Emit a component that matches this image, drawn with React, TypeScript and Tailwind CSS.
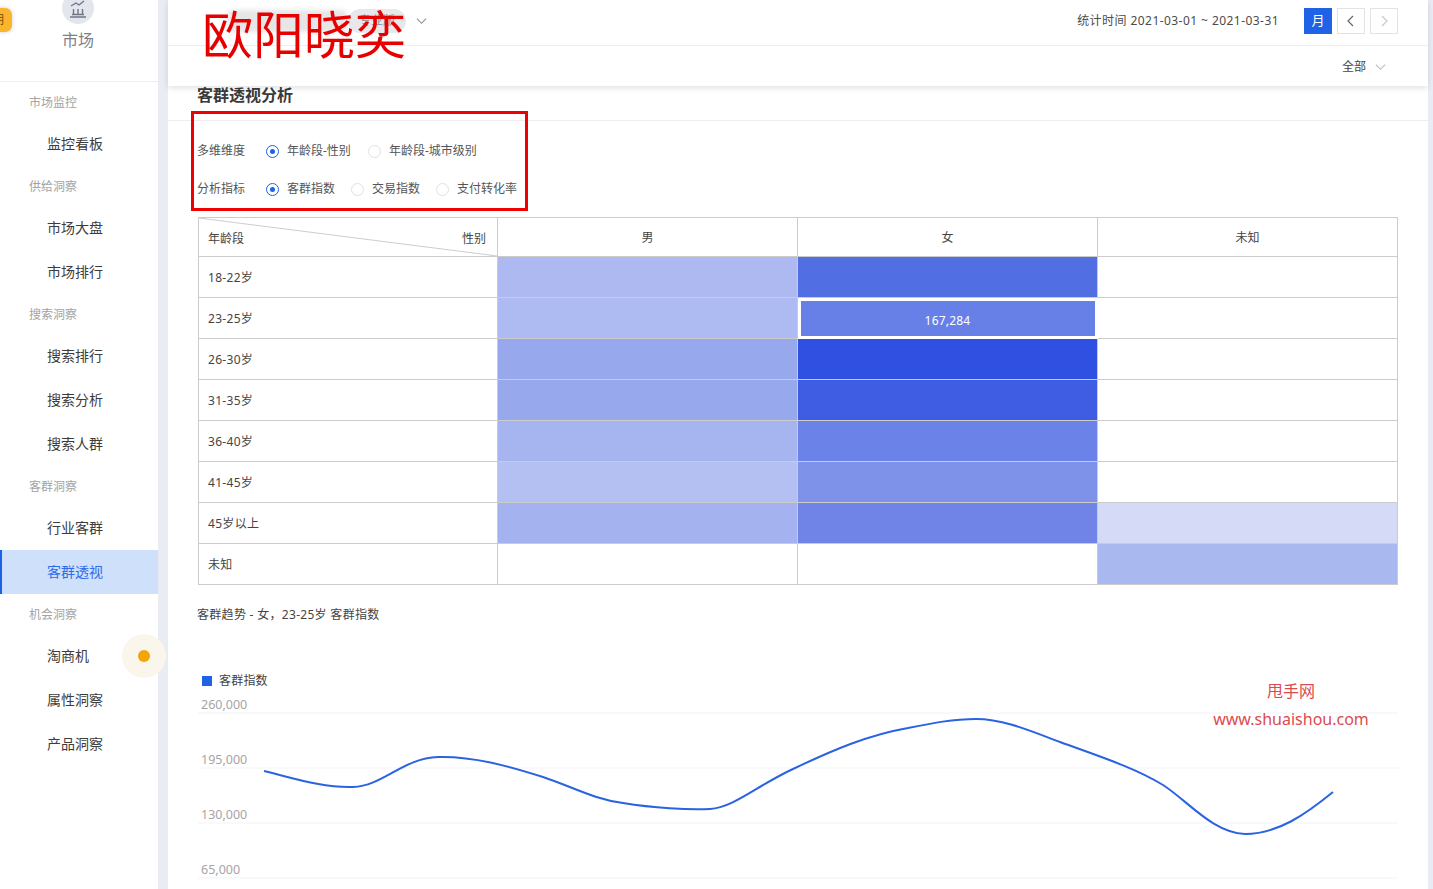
const FONT = "font-['Noto_Sans','Noto_Sans_CJK_SC',sans-serif]";

const NAV = [
  { group: "市场监控", items: ["监控看板"] },
  { group: "供给洞察", items: ["市场大盘", "市场排行"] },
  { group: "搜索洞察", items: ["搜索排行", "搜索分析", "搜索人群"] },
  { group: "客群洞察", items: ["行业客群", "客群透视"] },
  { group: "机会洞察", items: ["淘商机", "属性洞察", "产品洞察"] },
];

const ROWS = [
  { age: "18-22岁", male: "bg-[#aeb9f1]", female: "bg-[#516fe3]", unknown: "" },
  { age: "23-25岁", male: "bg-[#aebaf2]", female: "", unknown: "" },
  { age: "26-30岁", male: "bg-[#98a8ec]", female: "bg-[#2f50e0]", unknown: "" },
  { age: "31-35岁", male: "bg-[#98a8ec]", female: "bg-[#3e5de2]", unknown: "" },
  { age: "36-40岁", male: "bg-[#a6b4ef]", female: "bg-[#6b82e8]", unknown: "" },
  { age: "41-45岁", male: "bg-[#b4c0f2]", female: "bg-[#7f92ea]", unknown: "" },
  { age: "45岁以上", male: "bg-[#a4b2ef]", female: "bg-[#7084e8]", unknown: "bg-[#d5daf7]" },
  { age: "未知", male: "", female: "", unknown: "bg-[#aab8f0]" },
];

function Chevron({ dir = "down", className = "" }: { dir?: "down" | "left" | "right"; className?: string }) {
  const d = dir === "down" ? "M1 1.5l5 5 5-5" : dir === "left" ? "M8 1L3 6l5 5" : "M4 1l5 5-5 5";
  return (
    <svg viewBox={dir === "down" ? "0 0 12 8" : "0 0 12 12"} className={className} fill="none" stroke="currentColor" strokeWidth="1.2">
      <path d={d} />
    </svg>
  );
}

function Radio({ label, checked = false }: { label: string; checked?: boolean }) {
  return (
    <span className="flex items-center gap-[8px]">
      <span className={`flex h-[13px] w-[13px] items-center justify-center rounded-full border ${checked ? "border-[#2062e6]" : "border-[#e0e0e0]"}`}>
        {checked && <span className="h-[5px] w-[5px] rounded-full bg-[#2062e6]" />}
      </span>
      <span>{label}</span>
    </span>
  );
}

function Sidebar() {
  return (
    <aside className="relative w-[158px] shrink-0 bg-white">
      <div className="relative h-[82px] border-b border-[#eeeeee]">
        <div className="absolute -top-[8px] left-[62px] flex h-[32px] w-[32px] items-center justify-center rounded-full bg-[#e4e6ee] text-[#6f7686]">
          <svg viewBox="0 0 20 20" className="h-[20px] w-[20px]" fill="none" stroke="currentColor" strokeWidth="1.4">
            <path d="M2 19h16M4 16.5h12M5.5 16V11M10 16V11M14.5 16V11M3 8l5-3 3 2 5-4" />
          </svg>
        </div>
        <div className="absolute left-[-1px] top-[30px] w-full text-center text-[16px] leading-[21px] text-[#7d8087]">市场</div>
        <div className="absolute -left-[6px] top-[8px] flex h-[24px] w-[18px] items-center justify-end rounded-[7px] bg-[#fbb52c] pr-[8px] text-[12px] text-[#7a5200] shadow-[0_0_4px_rgba(0,0,0,0.2)]">
          期
        </div>
      </div>
      {NAV.map((n) => (
        <div key={n.group}>
          <div className="flex h-[40px] items-center pl-[29px] pt-[2px] text-[12px] text-[#a3a3a3]">{n.group}</div>
          {n.items.map((item) => (
            <div
              key={item}
              className={
                item === "客群透视"
                  ? "relative flex h-[44px] items-center border-l-2 border-[#1c62e8] bg-[#cfe0fb] pb-[2px] pl-[45px] text-[14px] text-[#2d6be8]"
                  : "relative flex h-[44px] items-center pb-[2px] pl-[47px] text-[14px] text-[#3c3c3c]"
              }
            >
              {item}
              {item === "淘商机" && (
                <span className="absolute left-[122px] top-0 flex h-[44px] w-[44px] items-center justify-center rounded-full bg-[#fbf6ec]">
                  <span className="h-[12px] w-[12px] rounded-full bg-[#f4a504]" />
                </span>
              )}
            </div>
          ))}
        </div>
      ))}
    </aside>
  );
}

function Header() {
  return (
    <header className="relative z-10 h-[86px] bg-white shadow-[0_2px_6px_rgba(0,0,0,0.12)]">
      <div className="relative flex h-[46px] items-center border-b border-[#eeeeee] pb-[3px]">
        <div className="ml-[60px] h-[22px] w-[118px] rounded-[4px] bg-[#e6e6e6] blur-[2px]" />
        <div className="ml-[2px] flex h-[24px] w-[58px] items-center justify-center rounded-full bg-[#e8e8ec] text-[12px] text-[#8f8f8f]">专业版</div>
        <Chevron className="ml-[10px] h-[8px] w-[11px] text-[#8f8f8f]" />
        <div className="ml-auto flex items-center text-[12px] text-[#4c4c4c]">
          <span className="tracking-[0.44px]">统计时间 2021-03-01 ~ 2021-03-31</span>
          <span className="ml-[25px] flex h-[26px] w-[28px] items-center justify-center bg-[#1f62e5] text-[13px] text-white">月</span>
          <span className="ml-[5px] flex h-[26px] w-[28px] items-center justify-center border border-[#e3e3e3] text-[#666666]">
            <Chevron dir="left" className="h-[12px] w-[12px]" />
          </span>
          <span className="ml-[5px] mr-[30px] flex h-[26px] w-[28px] items-center justify-center border border-[#e3e3e3] text-[#c8c8c8]">
            <Chevron dir="right" className="h-[12px] w-[12px]" />
          </span>
        </div>
      </div>
      <div className="flex h-[40px] items-center justify-end pr-[42px] pt-[2px] text-[12px] text-[#444444]">
        <span>全部</span>
        <Chevron className="ml-[9px] h-[8px] w-[11px] text-[#bdbdbd]" />
      </div>
    </header>
  );
}

function HeatTable() {
  const cell = "border border-[#cccccc] p-0";
  return (
    <table className="ml-[30px] w-[1200px] table-fixed border-collapse text-[12px] text-[#444444]">
      <thead>
        <tr className="h-[39px]">
          <th className={`${cell} relative w-[299px] font-normal`}>
            <svg viewBox="0 0 299 39" preserveAspectRatio="none" className="absolute inset-0 h-full w-full text-[#cccccc]">
              <path d="M0 0L299 39" stroke="currentColor" fill="none" />
            </svg>
            <div className="flex justify-between pl-[9px] pr-[11px] pt-[3px]">
              <span>年龄段</span>
              <span>性别</span>
            </div>
          </th>
          <th className={`${cell} pt-[2px] font-normal`}>男</th>
          <th className={`${cell} pt-[2px] font-normal`}>女</th>
          <th className={`${cell} pt-[2px] font-normal`}>未知</th>
        </tr>
      </thead>
      <tbody>
        {ROWS.map((r) => (
          <tr key={r.age} className="h-[41px]">
            <td className={`${cell} pl-[9px] pt-[2px] tracking-[0.3px]`}>{r.age}</td>
            <td className={`${cell} ${r.male}`} />
            {r.age === "23-25岁" ? (
              <td className={`${cell} bg-[#6780e8] text-center text-white outline-3 -outline-offset-3 outline-white`}>
                <span className="relative top-[3px] tracking-[0.2px]">167,284</span>
              </td>
            ) : (
              <td className={`${cell} ${r.female}`} />
            )}
            <td className={`${cell} ${r.unknown}`} />
          </tr>
        ))}
      </tbody>
    </table>
  );
}

function TrendChart() {
  const ticks = [
    { label: "260,000", y: 25 },
    { label: "195,000", y: 80 },
    { label: "130,000", y: 135 },
    { label: "65,000", y: 190 },
  ];
  return (
    <svg viewBox="0 0 1200 200" className="ml-[30px] block h-[200px] w-[1200px]">
      {ticks.map((t) => (
        <g key={t.label}>
          <path d={`M0 ${t.y}H1200`} stroke="#f3f3f8" />
          <text x="3" y={t.y - 4} fontSize="12.5" fill="#a8a4a4" fontFamily="Noto Sans, sans-serif">
            {t.label}
          </text>
        </g>
      ))}
      <path
        d="M66 83C95 90 125 100 155 99C185 98 205 70 240 69C275 68 310 78 345 89C375 99 395 111 425 115C455 120 490 122 512 121C535 120 560 97 595 81C635 62 670 47 710 40C735 35 755 31 778 31C806 31 835 44 862 54C900 68 935 79 965 97C990 113 1015 145 1047 146C1080 146 1108 126 1135 104"
        fill="none"
        stroke="#2a63e2"
        strokeWidth="2"
      />
    </svg>
  );
}

export default function App() {
  return (
    <div className={`${FONT} relative flex h-[889px] w-[1433px] overflow-hidden bg-[#e9ecf2]`}>
      <Sidebar />
      <main className="ml-[10px] mr-[5px] w-[1260px] bg-white">
        <Header />
        <h2 className="h-[35px] border-b border-[#eeeeee] pl-[29px] text-[16px] font-bold leading-[19px] text-[#3a3a3a]">客群透视分析</h2>
        <div className="flex h-[96px] flex-col pl-[29px] pt-[11px] text-[12px] text-[#555555]">
          <div className="flex h-[38px] items-center">
            <span className="w-[69px]">多维维度</span>
            <div className="flex gap-[17px]">
              <Radio label="年龄段-性别" checked />
              <Radio label="年龄段-城市级别" />
            </div>
          </div>
          <div className="flex h-[38px] items-center">
            <span className="w-[69px]">分析指标</span>
            <div className="flex gap-[16px]">
              <Radio label="客群指数" checked />
              <Radio label="交易指数" />
              <Radio label="支付转化率" />
            </div>
          </div>
        </div>
        <HeatTable />
        <div className="mt-[21px] pl-[29px] text-[12px] leading-[18px] tracking-[0.3px] text-[#444444]">客群趋势 - 女，23-25岁 客群指数</div>
        <div className="mt-[49px] flex h-[15px] items-center pl-[34px] text-[12px] tracking-[0.2px] text-[#444444]">
          <span className="mr-[7px] h-[10px] w-[10px] bg-[#1f62e5]" />
          客群指数
        </div>
        <TrendChart />
      </main>
      <div className="absolute left-[202px] top-[-1px] z-20 whitespace-nowrap text-[51px] leading-[70px] text-[#e60000]">欧阳晓奕</div>
      <div className="absolute left-[191px] top-[111px] z-20 h-[100px] w-[337px] border-[3px] border-[#f00000]" />
      <div className="absolute left-[1191px] top-[679px] z-20 w-[200px] text-center text-[16px] leading-[24px] text-[#dd4a4f]">甩手网</div>
      <div className="absolute left-[1190px] top-[706px] z-20 w-[202px] text-center text-[16px] leading-[26px] text-[#dd4a4f]">www.shuaishou.com</div>
    </div>
  );
}
